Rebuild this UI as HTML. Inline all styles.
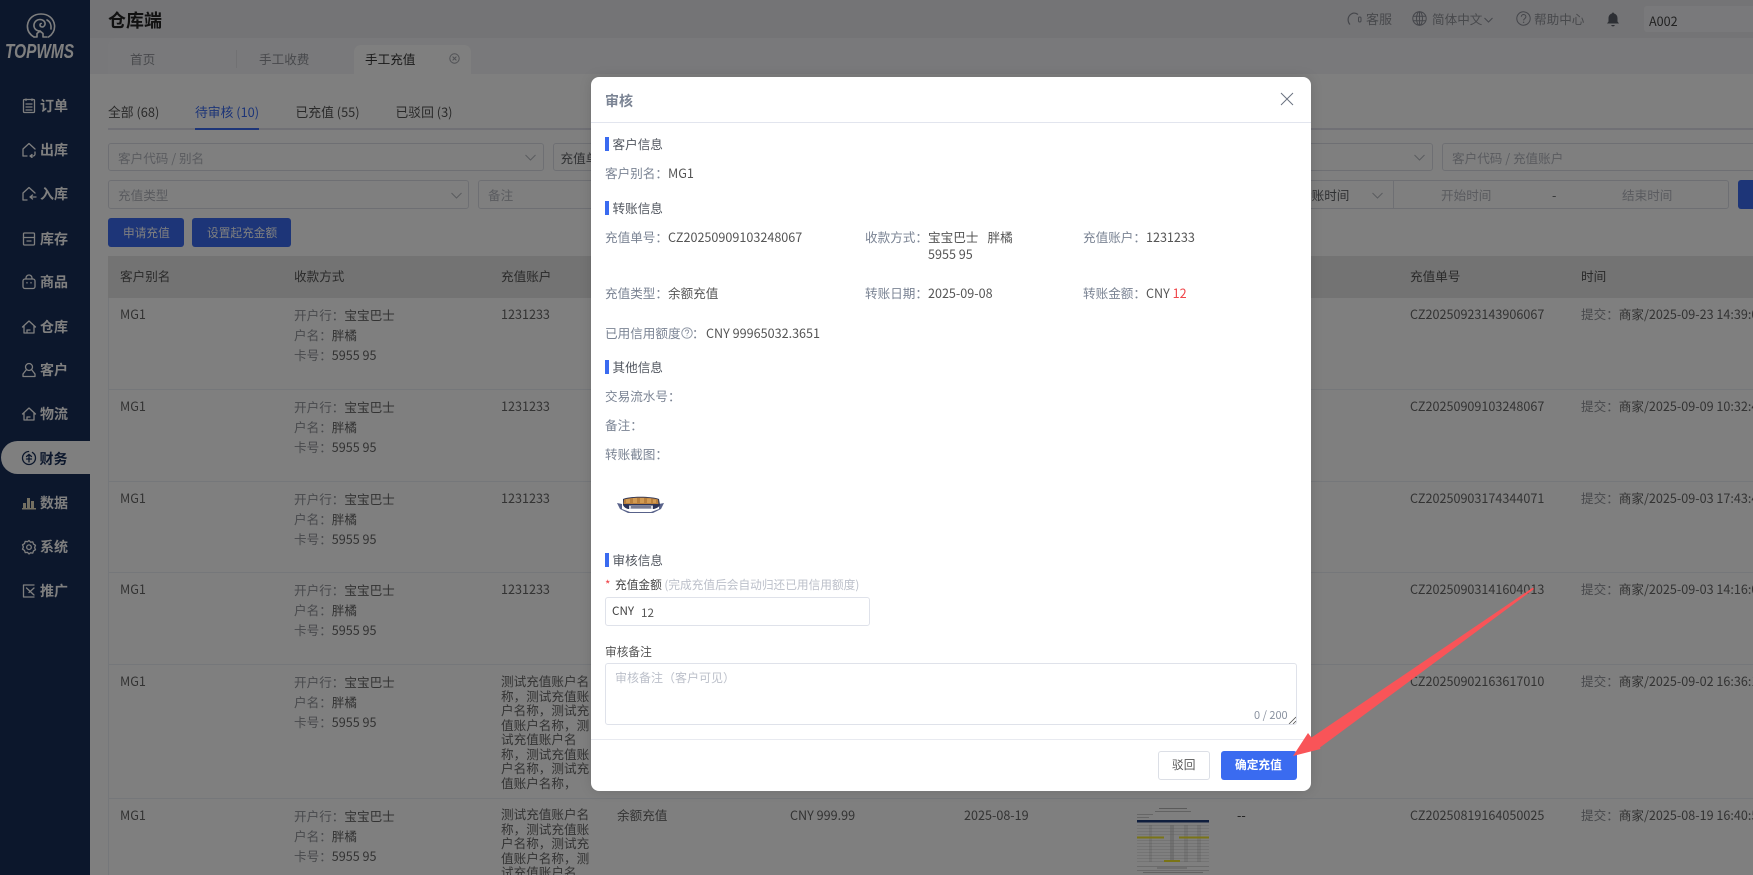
<!DOCTYPE html>
<html lang="zh-CN"><head><meta charset="utf-8"><title>仓库端</title>
<style>
html,body{margin:0;padding:0;width:1753px;height:875px;overflow:hidden;background:#fff}
body{position:relative;font-family:"Noto Sans CJK SC","Liberation Sans",sans-serif;font-size:12.6px;color:#666}
.a{position:absolute;box-sizing:border-box}
.t{position:absolute;white-space:nowrap;line-height:20px;height:20px}
.l{color:#909399}
.d{color:#606266}
.p{color:#b4b7bf}
.b{border:1px solid #dcdfe6;border-radius:3px;background:#fff}
.m{font-weight:700;font-size:14px;color:#fff}
.s{fill:none;stroke:#fff;stroke-width:1.3;stroke-linecap:round;stroke-linejoin:round}
.k{color:#333}
.g{color:#7b8494}
.h{color:#51565f;font-size:12.6px}
.line{position:absolute;background:#ebeef5;height:1px;left:108px;width:1645px}
.acc{position:absolute;left:501px;width:90px;line-height:14.5px;color:#666;white-space:nowrap}
.bar{position:absolute;left:605px;width:4px;height:14px;background:#3a6bf0}
</style></head><body>

<!-- base page -->
<div class="a" style="left:90px;top:0;width:1663px;height:38px;background:#e8e8ec"></div>
<div class="a" style="left:90px;top:38px;width:1663px;height:36px;background:#f0f0f4"></div>
<div class="a" style="left:108px;top:38px;width:1645px;height:36px;background:#f3f3f6;border-radius:8px 0 0 0"></div>
<div class="a" style="left:354px;top:45px;width:117px;height:29px;background:#fff;border-radius:7px 7px 0 0"></div>
<div class="a" style="left:236px;top:50px;width:1px;height:18px;background:#e2e2e6"></div>
<div class="t" style="left:108px;top:10px;font-size:18px;font-weight:700;color:#222">仓库端</div>
<div class="t" style="left:130px;top:49px;color:#909399">首页</div>
<div class="t" style="left:259px;top:49px;color:#909399">手工收费</div>
<div class="t" style="left:365px;top:49px;color:#333">手工充值</div>
<svg class="a" style="left:449px;top:53px" width="11" height="11" viewBox="0 0 11 11"><circle cx="5.5" cy="5.5" r="4.7" fill="none" stroke="#a0a3aa"/><path d="M3.6 3.6l3.8 3.8M7.4 3.6L3.6 7.4" stroke="#a0a3aa"/></svg>

<!-- header right -->
<svg class="a" style="left:1347px;top:12px" width="15" height="15" viewBox="0 0 15 15"><path d="M3 12.500C.5 10 .5 5.500 3 3s5.500-2.500 8 -.5" fill="none" stroke="#8a8d96" stroke-width="1.200"/><rect x="11.500" y="5" width="2.500" height="5" rx="1.200" fill="none" stroke="#8a8d96"/></svg>
<div class="t l" style="left:1366px;top:9px;font-size:13px">客服</div>
<svg class="a" style="left:1412px;top:11px" width="15" height="15" viewBox="0 0 15 15"><g fill="none" stroke="#8a8d96"><circle cx="7.5" cy="7.5" r="6.7"/><ellipse cx="7.5" cy="7.5" rx="3" ry="6.7"/><path d="M1 5.2h13M1 9.8h13M7.5 1v13"/></g></svg>
<div class="t l" style="left:1432px;top:9px;font-size:12.6px">简体中文</div>
<svg class="a" style="left:1484px;top:17px" width="9" height="6" viewBox="0 0 9 6"><path d="M.5 1l4 4 4-4" fill="none" stroke="#8a8d96"/></svg>
<svg class="a" style="left:1516px;top:11px" width="15" height="15" viewBox="0 0 15 15"><circle cx="7.5" cy="7.5" r="6.7" fill="none" stroke="#8a8d96"/><path d="M5.3 5.8c0-3 4.6-3 4.6 0 0 1.8-2.3 1.8-2.3 3.6" fill="none" stroke="#8a8d96"/><circle cx="7.6" cy="11.3" r=".7" fill="#8a8d96"/></svg>
<div class="t l" style="left:1534px;top:9px;font-size:12.6px">帮助中心</div>
<svg class="a" style="left:1606px;top:12px" width="14" height="15" viewBox="0 0 14 15"><path d="M7 .5a1 1 0 0 1 1 1c2.500.6 3.500 2.600 3.500 5v3l1.500 2H1l1.500-2v-3c0-2.400 1-4.400 3.500-5a1 1 0 0 1 1-1z" fill="#5a5e68"/><path d="M5.300 13a1.700 1.400 0 0 0 3.400 0z" fill="#5a5e68"/></svg>
<div class="a" style="left:1644px;top:6px;width:109px;height:26px;background:#f3f3f6;border-radius:3px 0 0 3px"></div>
<div class="t" style="left:1649px;top:11px;color:#444;font-size:12.6px">A002</div>

<!-- sub tabs -->
<div class="a" style="left:108px;top:128px;width:1645px;height:2px;background:#e0e0ea"></div>
<div class="a" style="left:195px;top:128px;width:64px;height:2px;background:#3a6bf0"></div>
<div class="t" style="left:108px;top:102px;color:#555;font-size:12.8px">全部 (68)</div>
<div class="t" style="left:195px;top:102px;color:#3a6bf0;font-size:12.8px">待审核 (10)</div>
<div class="t" style="left:295.500px;top:102px;color:#555;font-size:12.8px">已充值 (55)</div>
<div class="t" style="left:395.500px;top:102px;color:#555;font-size:12.8px">已驳回 (3)</div>

<!-- filters -->
<div class="a b" style="left:108px;top:143px;width:436px;height:28px"></div>
<div class="t p" style="left:118px;top:148px">客户代码 / 别名</div>
<svg class="a" style="left:525px;top:154px" width="11" height="7" viewBox="0 0 11 7"><path d="M.5 1l5 5 5-5" fill="none" stroke="#b4b7bf"/></svg>
<div class="a b" style="left:553px;top:143px;width:880px;height:28px"></div>
<div class="t d" style="left:560.500px;top:148px">充值单号</div>
<svg class="a" style="left:1414px;top:154px" width="11" height="7" viewBox="0 0 11 7"><path d="M.5 1l5 5 5-5" fill="none" stroke="#b4b7bf"/></svg>
<div class="a b" style="left:1442px;top:143px;width:330px;height:28px"></div>
<div class="t p" style="left:1452px;top:148px">客户代码 / 充值账户</div>

<div class="a b" style="left:108px;top:180px;width:361px;height:29px"></div>
<div class="t p" style="left:118px;top:185px">充值类型</div>
<svg class="a" style="left:451px;top:192px" width="11" height="7" viewBox="0 0 11 7"><path d="M.5 1l5 5 5-5" fill="none" stroke="#b4b7bf"/></svg>
<div class="a b" style="left:478px;top:180px;width:1251px;height:29px"></div>
<div class="t p" style="left:488px;top:185px">备注</div>
<div class="t d" style="left:1299px;top:185px">转账时间</div>
<svg class="a" style="left:1372px;top:192px" width="11" height="7" viewBox="0 0 11 7"><path d="M.5 1l5 5 5-5" fill="none" stroke="#b4b7bf"/></svg>
<div class="a" style="left:1393px;top:180px;width:1px;height:29px;background:#dcdfe6"></div>
<div class="t p" style="left:1441px;top:185px">开始时间</div>
<div class="t d" style="left:1552px;top:185px">-</div>
<div class="t p" style="left:1622px;top:185px">结束时间</div>
<div class="a" style="left:1738px;top:180px;width:30px;height:29px;background:#3a6bf0;border-radius:3px"></div>

<div class="a" style="left:108px;top:218px;width:76px;height:29px;background:#3a6bf0;border-radius:3px"></div>
<div class="t" style="left:123px;top:223px;color:#fff;font-size:11.7px">申请充值</div>
<div class="a" style="left:192px;top:218px;width:99px;height:29px;background:#3a6bf0;border-radius:3px"></div>
<div class="t" style="left:207px;top:223px;color:#fff;font-size:11.7px">设置起充金额</div>

<!-- table -->
<div class="a" style="left:108px;top:256px;width:1645px;height:42px;background:#e6e6e6"></div>
<div class="a" style="left:108px;top:298px;width:1px;height:577px;background:#ebeef5"></div>
<div class="t k" style="left:120px;top:266px;color:#555">客户别名</div>
<div class="t k" style="left:294px;top:266px;color:#555">收款方式</div>
<div class="t k" style="left:501px;top:266px;color:#555">充值账户</div>
<div class="t k" style="left:1410px;top:266px;color:#555">充值单号</div>
<div class="t k" style="left:1581px;top:266px;color:#555">时间</div>
<div class="line" style="top:389px"></div><div class="line" style="top:481px"></div><div class="line" style="top:572px"></div><div class="line" style="top:664px"></div><div class="line" style="top:798px"></div>

<!-- row1 -->
<div class="t" style="left:120px;top:304px">MG1</div>
<div class="t" style="left:294px;top:305px"><span class="l">开户行：</span>宝宝巴士</div>
<div class="t" style="left:294px;top:325px"><span class="l">户名：</span>胖橘</div>
<div class="t" style="left:294px;top:345px"><span class="l">卡号：</span>5955 95</div>
<div class="t" style="left:501px;top:304px">1231233</div>
<div class="t" style="left:1410px;top:304px">CZ20250923143906067</div>
<div class="t" style="left:1581px;top:304px"><span class="l">提交：</span>商家/2025-09-23 14:39:09</div>
<!-- row2 -->
<div class="t" style="left:120px;top:396px">MG1</div>
<div class="t" style="left:294px;top:397px"><span class="l">开户行：</span>宝宝巴士</div>
<div class="t" style="left:294px;top:417px"><span class="l">户名：</span>胖橘</div>
<div class="t" style="left:294px;top:437px"><span class="l">卡号：</span>5955 95</div>
<div class="t" style="left:501px;top:396px">1231233</div>
<div class="t" style="left:1410px;top:396px">CZ20250909103248067</div>
<div class="t" style="left:1581px;top:396px"><span class="l">提交：</span>商家/2025-09-09 10:32:48</div>
<!-- row3 -->
<div class="t" style="left:120px;top:488px">MG1</div>
<div class="t" style="left:294px;top:489px"><span class="l">开户行：</span>宝宝巴士</div>
<div class="t" style="left:294px;top:509px"><span class="l">户名：</span>胖橘</div>
<div class="t" style="left:294px;top:529px"><span class="l">卡号：</span>5955 95</div>
<div class="t" style="left:501px;top:488px">1231233</div>
<div class="t" style="left:1410px;top:488px">CZ20250903174344071</div>
<div class="t" style="left:1581px;top:488px"><span class="l">提交：</span>商家/2025-09-03 17:43:44</div>
<!-- row4 -->
<div class="t" style="left:120px;top:579px">MG1</div>
<div class="t" style="left:294px;top:580px"><span class="l">开户行：</span>宝宝巴士</div>
<div class="t" style="left:294px;top:600px"><span class="l">户名：</span>胖橘</div>
<div class="t" style="left:294px;top:620px"><span class="l">卡号：</span>5955 95</div>
<div class="t" style="left:501px;top:579px">1231233</div>
<div class="t" style="left:1410px;top:579px">CZ20250903141604013</div>
<div class="t" style="left:1581px;top:579px"><span class="l">提交：</span>商家/2025-09-03 14:16:04</div>
<!-- row5 -->
<div class="t" style="left:120px;top:671px">MG1</div>
<div class="t" style="left:294px;top:672px"><span class="l">开户行：</span>宝宝巴士</div>
<div class="t" style="left:294px;top:692px"><span class="l">户名：</span>胖橘</div>
<div class="t" style="left:294px;top:712px"><span class="l">卡号：</span>5955 95</div>
<div class="acc" style="top:674px">测试充值账户名<br>称，测试充值账<br>户名称，测试充<br>值账户名称，测<br>试充值账户名<br>称，测试充值账<br>户名称，测试充<br>值账户名称，</div>
<div class="t" style="left:1410px;top:671px">CZ20250902163617010</div>
<div class="t" style="left:1581px;top:671px"><span class="l">提交：</span>商家/2025-09-02 16:36:17</div>
<!-- row6 -->
<div class="t" style="left:120px;top:805px">MG1</div>
<div class="t" style="left:294px;top:806px"><span class="l">开户行：</span>宝宝巴士</div>
<div class="t" style="left:294px;top:826px"><span class="l">户名：</span>胖橘</div>
<div class="t" style="left:294px;top:846px"><span class="l">卡号：</span>5955 95</div>
<div class="acc" style="top:807px">测试充值账户名<br>称，测试充值账<br>户名称，测试充<br>值账户名称，测<br>试充值账户名</div>
<div class="t" style="left:617px;top:805px">余额充值</div>
<div class="t" style="left:790px;top:805px">CNY 999.99</div>
<div class="t" style="left:964px;top:805px">2025-08-19</div>
<div class="t" style="left:1237px;top:805px;color:#333">--</div>
<div class="t" style="left:1410px;top:805px">CZ20250819164050025</div>
<div class="t" style="left:1581px;top:805px"><span class="l">提交：</span>商家/2025-08-19 16:40:50</div>
<svg class="a" style="left:1137px;top:806px" width="72" height="69" viewBox="0 0 72 69">
<rect x="22" y="2" width="28" height="1" fill="#b5b5b5"/><rect x="18" y="5" width="36" height="1" fill="#c4c4c4"/><rect x="0" y="8" width="16" height="1" fill="#ccc"/><rect x="0" y="11" width="12" height="1" fill="#ccc"/>
<rect x="0" y="14" width="72" height="2.500" fill="#1f3d7a"/>
<g fill="#d8d8d8"><rect x="0" y="19" width="72" height=".6"/><rect x="0" y="22" width="72" height=".6"/><rect x="0" y="25" width="72" height=".6"/><rect x="0" y="28" width="72" height=".6"/><rect x="0" y="34" width="72" height=".6"/><rect x="0" y="37" width="72" height=".6"/><rect x="0" y="40" width="72" height=".6"/><rect x="0" y="43" width="72" height=".6"/><rect x="0" y="46" width="72" height=".6"/><rect x="0" y="49" width="72" height=".6"/><rect x="0" y="52" width="72" height=".6"/><rect x="0" y="55" width="72" height=".6"/></g>
<g fill="#bbb"><rect x="12" y="19" width="3" height="37" opacity=".3"/><rect x="33" y="19" width="4" height="37" opacity=".45"/><rect x="47" y="19" width="4" height="37" opacity=".3"/><rect x="60" y="19" width="4" height="37" opacity=".3"/></g>
<rect x="0" y="30.500" width="27" height="2" fill="#f5e82c"/><rect x="42" y="30.500" width="30" height="2" fill="#f5e82c"/><rect x="27" y="54" width="16" height="2" fill="#f5e82c"/>
<rect x="0" y="60" width="72" height=".8" fill="#ccc"/><rect x="0" y="64" width="72" height=".8" fill="#ccc"/><rect x="20" y="61.500" width="30" height="1" fill="#bbb"/><rect x="6" y="66" width="60" height="1" fill="#c4c4c4"/>
</svg>

<!-- sidebar -->
<div class="a" style="left:0;top:0;width:90px;height:875px;background:#182e58"></div>
<svg class="a" style="left:26px;top:13px" width="30" height="26" viewBox="0 0 30 26"><g fill="none" stroke="#fff" stroke-width="1.600" stroke-linecap="round" stroke-linejoin="round"><path d="M8 24C3 21 1 17 1.500 12 2.500 5 8 1 15 1s12.500 4 13.500 11c.5 5-1.500 9-6 12"/><path d="M8 24h3v-3.500l3-2.500 3 2.500V24h4"/><path d="M14 18c-4 0-6.500-3-6-6.500.5-3 3-5 6-5 3.500 0 5.500 2.500 5 5-.4 2-2.500 3-4 2.200-1.400-.8-1.300-3 .2-3.200"/><path d="M21 7c3 1.500 4.500 5 4 9"/></g></svg>
<div class="t" style="left:5px;top:42px;height:21px;line-height:21px;font-family:'Liberation Sans',sans-serif;font-style:italic;font-weight:700;font-size:20px;color:#fff;transform:scaleX(.77);transform-origin:left center">TOPWMS</div>

<svg class="a" style="left:21px;top:98px" width="16" height="16" viewBox="0 0 16 16"><g class="s"><rect x="2.500" y="1.500" width="11" height="13" rx="1"/><path d="M5 1v1.500M11 1v1.500M5 6h6M5 9h6M5 12h6"/></g></svg>
<div class="t m" style="left:40px;top:96px">订单</div>
<svg class="a" style="left:21px;top:142px" width="16" height="16" viewBox="0 0 16 16"><g class="s"><path d="M2 14V7l6-5.500L14 7"/><path d="M2 14h4M14 10v2a2 2 0 0 1-2 2h-3l2-1.500M9 14l2 1.500"/></g></svg>
<div class="t m" style="left:40px;top:140px">出库</div>
<svg class="a" style="left:21px;top:186px" width="16" height="16" viewBox="0 0 16 16"><g class="s"><path d="M2 14V7l6-5.500L14 7"/><path d="M2 14h4M15 11H9l2.500-2M9 11l2.500 2"/></g></svg>
<div class="t m" style="left:40px;top:184px">入库</div>
<svg class="a" style="left:21px;top:231px" width="16" height="16" viewBox="0 0 16 16"><g class="s"><rect x="2.500" y="2" width="11" height="12" rx="1"/><path d="M2.500 6.500h11M6 10h4"/></g></svg>
<div class="t m" style="left:40px;top:229px">库存</div>
<svg class="a" style="left:21px;top:274px" width="16" height="16" viewBox="0 0 16 16"><g class="s"><rect x="2" y="5" width="12" height="9.500" rx="2"/><path d="M5 5V4a3 3 0 0 1 6 0v1M6 8.500v.5M10 8.500v.5"/></g></svg>
<div class="t m" style="left:40px;top:272px">商品</div>
<svg class="a" style="left:21px;top:319px" width="16" height="16" viewBox="0 0 16 16"><g class="s"><path d="M1.500 8L8 2l6.500 6M3 7v7h10V7M6 14v-3h3"/></g></svg>
<div class="t m" style="left:40px;top:317px">仓库</div>
<svg class="a" style="left:21px;top:362px" width="16" height="16" viewBox="0 0 16 16"><g class="s"><circle cx="8" cy="5" r="3.500"/><path d="M5.500 7.500L2 12v2.500h12V12l-3.500-4.500"/></g></svg>
<div class="t m" style="left:40px;top:360px">客户</div>
<svg class="a" style="left:21px;top:406px" width="16" height="16" viewBox="0 0 16 16"><g class="s"><path d="M1.500 8L8 2l6.500 6M3 7v7h10V7M6 14v-3h3"/></g></svg>
<div class="t m" style="left:40px;top:404px">物流</div>

<div class="a" style="left:1px;top:441px;width:89px;height:33px;background:#fff;border-radius:17px 0 0 17px"></div>
<svg class="a" style="left:21px;top:450px" width="16" height="16" viewBox="0 0 16 16"><g fill="none" stroke="#182e58" stroke-width="1.300" stroke-linecap="round"><circle cx="8" cy="8" r="6.500" stroke-dasharray="30 4"/><path d="M5.500 6.500L8 4.500l2.500 2M5.500 9h5M8 6v6"/></g></svg>
<div class="t m" style="left:39.500px;top:449px;color:#182e58">财务</div>

<svg class="a" style="left:21px;top:495px" width="16" height="16" viewBox="0 0 16 16"><g fill="#e6dfc4"><rect x="2" y="8" width="3" height="5"/><rect x="6" y="3" width="3" height="10"/><rect x="10" y="6" width="3" height="7"/><rect x="1" y="13" width="14" height="1.500"/></g></svg>
<div class="t m" style="left:40px;top:493px">数据</div>
<svg class="a" style="left:21px;top:539px" width="16" height="16" viewBox="0 0 16 16"><g class="s"><path d="M8 1.500l1.500 1.700 2.300-.3.700 2.200 2 1.200-.9 2.200.9 2.200-2 1.200-.7 2.200-2.300-.3L8 15l-1.500-1.700-2.300.3-.7-2.200-2-1.200.9-2.200-.9-2.200 2-1.200.7-2.200 2.300.3z"/><circle cx="8" cy="8.200" r="2.300"/></g></svg>
<div class="t m" style="left:40px;top:537px">系统</div>
<svg class="a" style="left:21px;top:583px" width="16" height="16" viewBox="0 0 16 16"><g class="s"><path d="M13 2H2.500v12H13M5.500 5l7.500 7M13 5L8 9.500"/></g></svg>
<div class="t m" style="left:40px;top:581px">推广</div>

<!-- overlay -->
<div class="a" style="left:0;top:0;width:1753px;height:875px;background:rgba(0,0,0,.5)"></div>

<!-- modal -->
<div class="a" style="left:591px;top:77px;width:720px;height:714px;background:#fff;border-radius:8px;box-shadow:0 0 12px rgba(0,0,0,.12)"></div>
<div class="t" style="left:605px;top:90.500px;font-size:14px;font-weight:700;color:#7b8494">审核</div>
<svg class="a" style="left:1280px;top:92px" width="14" height="14" viewBox="0 0 14 14"><path d="M1 1l12 12M13 1L1 13" stroke="#6b7280" stroke-width="1" fill="none"/></svg>
<div class="a" style="left:591px;top:122px;width:720px;height:1px;background:#e2e5ee"></div>

<div class="bar" style="top:137px"></div><div class="t h" style="left:612.500px;top:134px">客户信息</div>
<div class="t" style="left:605px;top:163px;color:#555"><span class="g">客户别名：</span>MG1</div>

<div class="bar" style="top:201px"></div><div class="t h" style="left:612.500px;top:198px">转账信息</div>
<div class="t" style="left:605px;top:227px;color:#555"><span class="g">充值单号：</span>CZ20250909103248067</div>
<div class="t g" style="left:865px;top:227px">收款方式：</div>
<div class="t" style="left:928px;top:227px;color:#555">宝宝巴士</div>
<div class="t" style="left:987.500px;top:227px;color:#555">胖橘</div>
<div class="t" style="left:928px;top:244px;color:#555">5955 95</div>
<div class="t" style="left:1083px;top:227px;color:#555"><span class="g">充值账户：</span>1231233</div>
<div class="t" style="left:605px;top:283px;color:#555"><span class="g">充值类型：</span>余额充值</div>
<div class="t" style="left:865px;top:283px;color:#555"><span class="g">转账日期：</span>2025-09-08</div>
<div class="t" style="left:1083px;top:283px;color:#555"><span class="g">转账金额：</span>CNY <span style="color:#f0464a">12</span></div>
<div class="t" style="left:605px;top:323px;color:#555"><span class="g">已用信用额度</span></div>
<svg class="a" style="left:681px;top:327px" width="12" height="12" viewBox="0 0 12 12"><circle cx="6" cy="6" r="5.200" fill="none" stroke="#8a92a0" stroke-width=".9"/><path d="M4.300 4.600c0-2.200 3.400-2.200 3.400 0 0 1.300-1.700 1.300-1.700 2.600" fill="none" stroke="#8a92a0" stroke-width=".9"/><circle cx="6" cy="8.800" r=".5" fill="#8a92a0"/></svg>
<div class="t g" style="left:692px;top:323px">：</div>
<div class="t" style="left:706px;top:323px;color:#555">CNY 99965032.3651</div>

<div class="bar" style="top:360px"></div><div class="t h" style="left:612.500px;top:357px">其他信息</div>
<div class="t g" style="left:605px;top:386px">交易流水号：</div>
<div class="t g" style="left:605px;top:415px">备注：</div>
<div class="t g" style="left:605px;top:444px">转账截图：</div>
<svg class="a" style="left:617px;top:495px" width="47" height="19" viewBox="0 0 47 19">
<path d="M0 8l5 1v5l8 3h21l8-3V9l5-1-3 6-8 4H11l-8-4z" fill="#58628a"/>
<path d="M6 4c6-3 29-3 36 0l1 6c-1 2-3 3-6 4H11c-3-1-4-2-5-4z" fill="#2c3356"/>
<path d="M7 4.500c8-2.500 26-2.500 34 0l.5 4.500H6.500z" fill="#b97f3c"/>
<g fill="#d29a52"><rect x="9" y="4" width="4" height="4"/><rect x="16" y="3" width="4" height="5"/><rect x="23" y="3" width="4" height="5"/><rect x="30" y="3.500" width="4" height="4.500"/><rect x="36" y="4.500" width="3" height="3.500"/></g>
<rect x="12" y="10.500" width="24" height="3.500" fill="#cfd3e0"/><rect x="14" y="11" width="20" height="2.500" fill="#3a3f5c" opacity=".6"/>
</svg>

<div class="bar" style="top:553px"></div><div class="t h" style="left:612.500px;top:550px">审核信息</div>
<div class="t" style="left:605px;top:575px;color:#f0464a;font-size:11.7px">*</div>
<div class="t" style="left:615px;top:575px;font-size:11.7px;color:#444">充值金额 <span style="color:#bcc0ca">(完成充值后会自动归还已用信用额度)</span></div>
<div class="a" style="left:605px;top:597px;width:265px;height:29px;border:1px solid #dfe2ea;border-radius:3px;background:#fff"></div>
<div class="t" style="left:612px;top:601px;font-size:11.7px;color:#444">CNY</div>
<div class="t" style="left:641px;top:603px;font-size:11.7px;color:#555">12</div>

<div class="t" style="left:605px;top:642px;font-size:11.7px;color:#555">审核备注</div>
<div class="a" style="left:605px;top:663px;width:692px;height:62px;border:1px solid #dfe2ea;border-radius:3px;background:#fff"></div>
<div class="t" style="left:615px;top:668px;font-size:12px;color:#bcc0ca">审核备注（客户可见）</div>
<div class="t" style="left:1254px;top:705px;font-size:11px;color:#8a92a0">0 / 200</div>
<svg class="a" style="left:1288px;top:716px" width="8" height="8" viewBox="0 0 8 8"><path d="M1 8l7-7M5 8l3-3" stroke="#555" stroke-width=".8"/></svg>

<div class="a" style="left:591px;top:739px;width:720px;height:1px;background:#e8eaf0"></div>
<div class="a" style="left:1158px;top:751px;width:52px;height:29px;border:1px solid #dcdfe6;border-radius:3px;background:#fff"></div>
<div class="t" style="left:1172px;top:755px;font-size:11.7px;color:#555">驳回</div>
<div class="a" style="left:1221px;top:751px;width:76px;height:29px;background:#3a6bf0;border-radius:3px"></div>
<div class="t" style="left:1235px;top:755px;font-size:11.7px;font-weight:700;color:#fff">确定充值</div>

<!-- arrow -->
<svg class="a" style="left:0;top:0" width="1753" height="875" viewBox="0 0 1753 875"><polygon points="1533,587.500 1534,589 1320,747.500 1320.500,749 1293,756 1308,733 1311.500,737.500" fill="#f95458"/></svg>

</body></html>
